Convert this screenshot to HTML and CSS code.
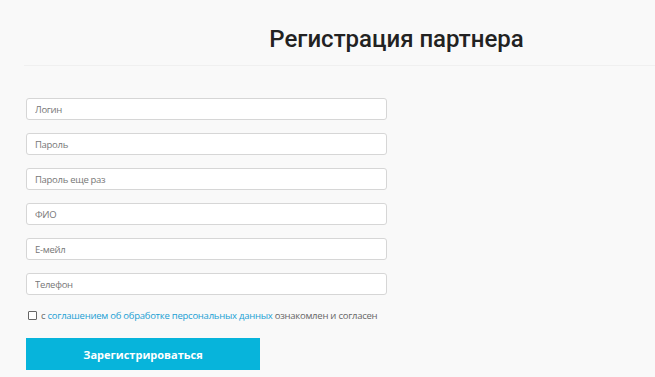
FILE: index.html
```html
<!DOCTYPE html>
<html lang="ru">
<head>
    <meta charset="UTF-8">
    <meta name="viewport" content="width=device-width, initial-scale=1">
    <title>Регистрация партнера</title>
    <link rel="stylesheet" href="styles.css">
</head>
<body>
    <div class="page">
        <div class="page-head">
            <h1>Регистрация партнера</h1>
        </div>

        <form class="reg-form">
            <input class="field" type="text" name="login" placeholder="Логин">
            <input class="field" type="password" name="password" placeholder="Пароль">
            <input class="field" type="password" name="password2" placeholder="Пароль еще раз">
            <input class="field" type="text" name="fio" placeholder="ФИО">
            <input class="field" type="email" name="email" placeholder="Е-мейл">
            <input class="field" type="tel" name="phone" placeholder="Телефон">

            <label class="agree">
                <span class="check"></span>
                <span>с <a href="#">соглашением об обработке персональных данных</a> ознакомлен и согласен</span>
            </label>

            <button type="submit" class="btn">Зарегистрироваться</button>
        </form>
    </div>
</body>
</html>
```
FILE: styles.css
```css
* {
    margin: 0;
    padding: 0;
    box-sizing: border-box;
}

html, body {
    height: 100%;
    overflow: hidden;
}

body {
    background: #f9f9f9;
    font-family: 'Open Sans', sans-serif;
    color: #666;
}

.page {
    margin-left: 24px;
}

.page-head {
    height: 66px;
    border-bottom: 1px solid #f0f0f0;
    padding-top: 24px;
}

.page-head h1 {
    font-family: Roboto, sans-serif;
    font-weight: 500;
    font-size: 24px;
    line-height: 30px;
    color: #222;
    text-align: center;
    padding-left: 114px;
}

.reg-form {
    padding: 32px 0 0 2px;
    display: flex;
    flex-direction: column;
    align-items: flex-start;
}

.field {
    width: 361px;
    height: 22px;
    margin-bottom: 13px;
    padding: 0 8px;
    background: #fff;
    border: 1px solid #d6d6d6;
    border-radius: 3px;
    font-family: 'Open Sans', sans-serif;
    font-size: 9.5px;
    letter-spacing: -0.3px;
    color: #555;
}

.field::placeholder { color: #777; }

.agree {
    display: flex;
    align-items: center;
    gap: 4px;
    margin: 1px 0 0 2px;
    font-size: 9.5px;
    letter-spacing: -0.25px;
    color: #666;
}

.check {
    width: 9px;
    height: 9px;
    border: 1px solid #666;
    border-radius: 1px;
    background: #fff;
}

.agree a {
    color: #1b9fd4;
    text-decoration: none;
}

.btn {
    margin-top: 16px;
    width: 234px;
    height: 32px;
    background: #07b4db;
    border: none;
    color: #fff;
    font-family: 'Open Sans', sans-serif;
    font-weight: bold;
    font-size: 11px;
    cursor: pointer;
}
```
